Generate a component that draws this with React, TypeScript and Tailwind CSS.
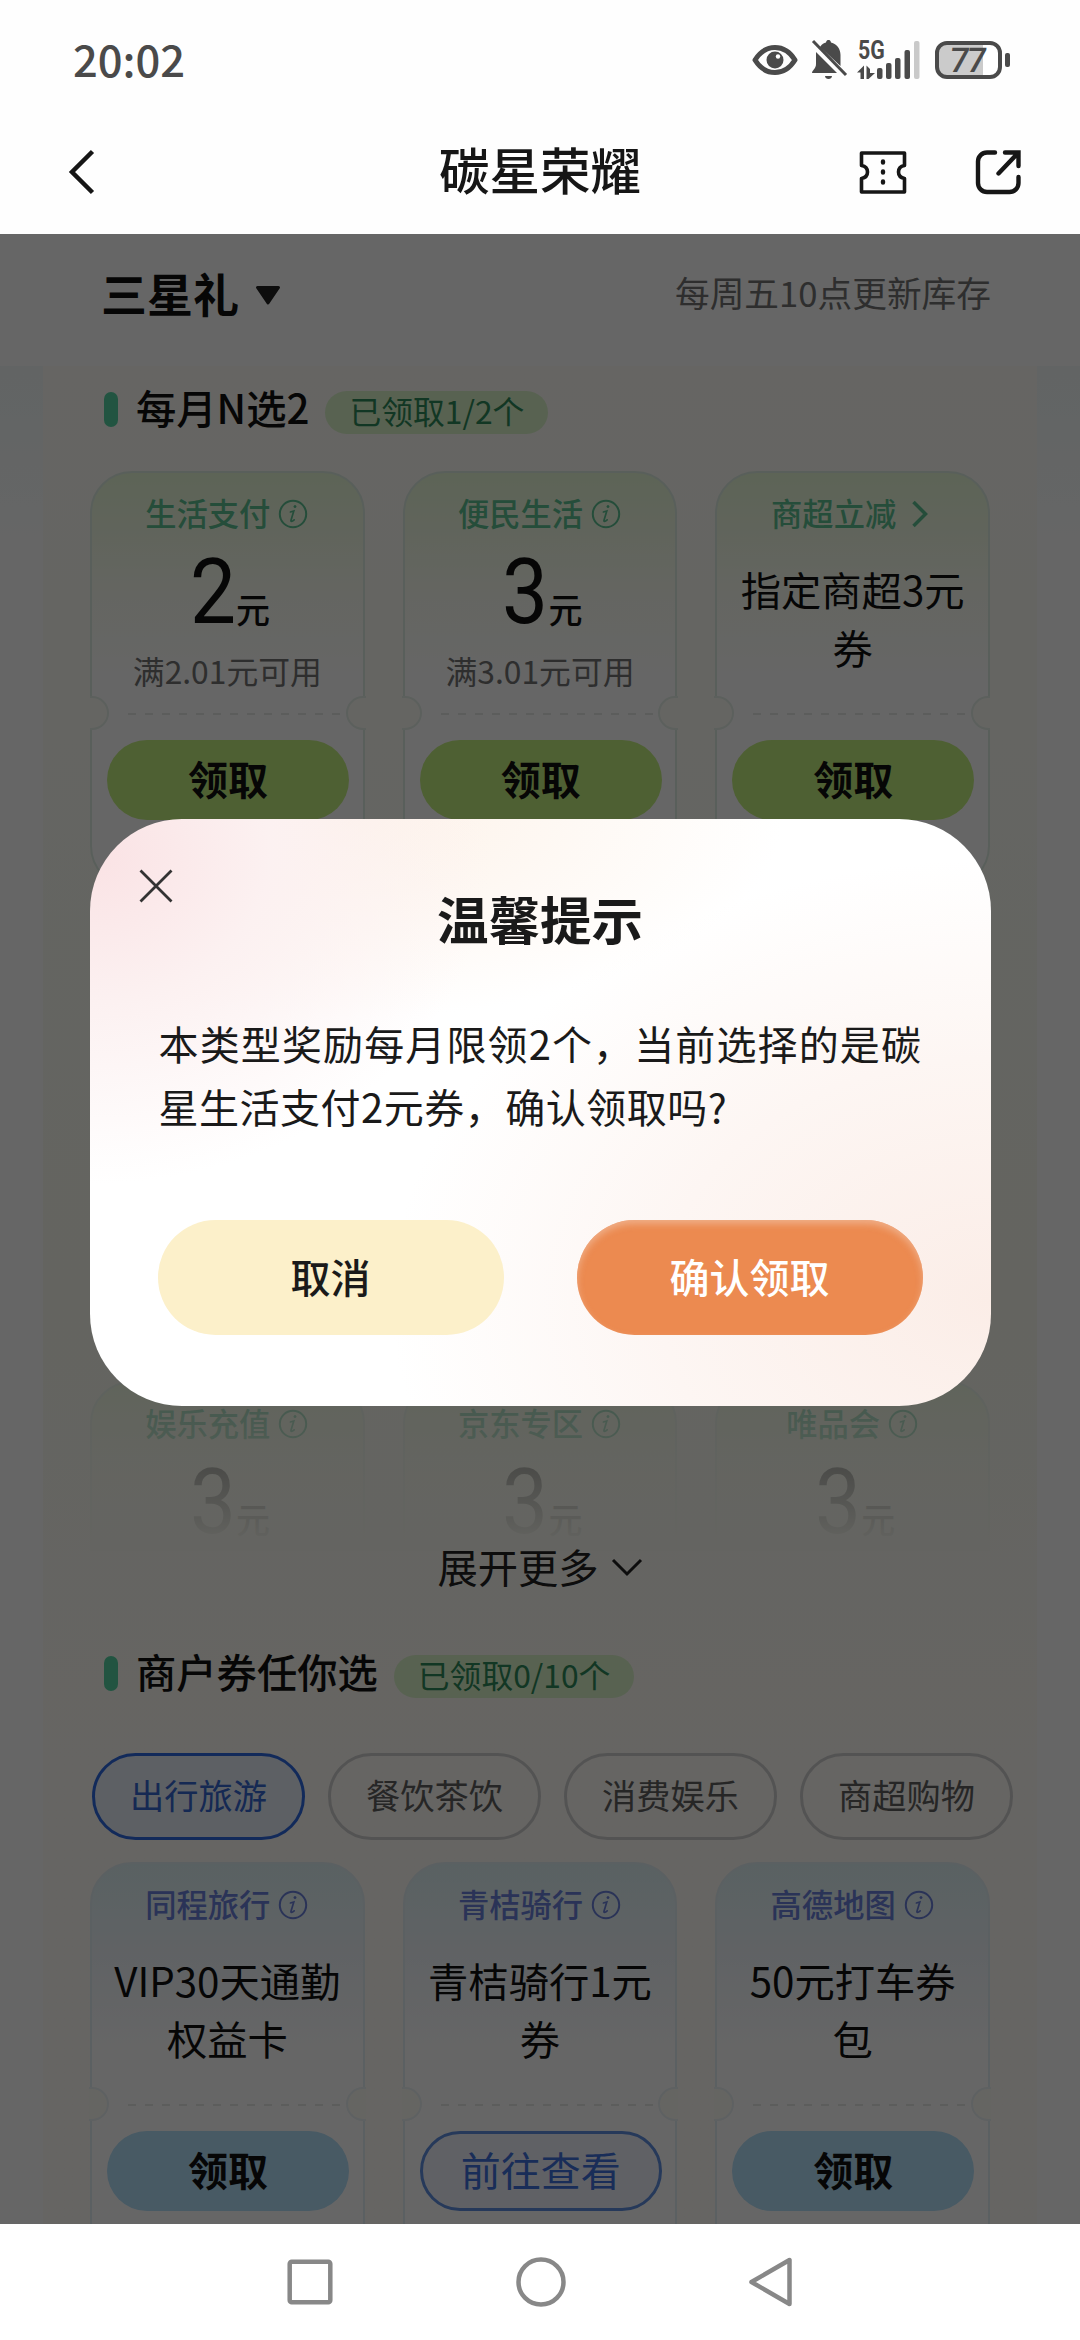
import { clsx } from 'clsx';

type Tone = 'green' | 'blue';

interface Coupon {
  brand: string;
  amount?: string;
  note?: string;
  lines?: string[];
  action?: string;
  outlined?: boolean;
  arrow?: boolean;
}

const MONTHLY: Coupon[] = [
  { brand: '生活支付', amount: '2', note: '满2.01元可用', action: '领取' },
  { brand: '便民生活', amount: '3', note: '满3.01元可用', action: '领取' },
  { brand: '商超立减', lines: ['指定商超3元', '券'], action: '领取', arrow: true },
];

const MONTHLY_MORE: Coupon[] = [
  { brand: '娱乐充值', amount: '3' },
  { brand: '京东专区', amount: '3' },
  { brand: '唯品会', amount: '3' },
];

const MERCHANT: Coupon[] = [
  { brand: '同程旅行', lines: ['VIP30天通勤', '权益卡'], action: '领取' },
  { brand: '青桔骑行', lines: ['青桔骑行1元', '券'], action: '前往查看', outlined: true },
  { brand: '高德地图', lines: ['50元打车券', '包'], action: '领取' },
];

const TABS = ['出行旅游', '餐饮茶饮', '消费娱乐', '商超购物'];

function InfoIcon() {
  return (
    <svg width="30" height="30" viewBox="0 0 30 30" fill="none" stroke="currentColor" strokeWidth="2">
      <circle cx="15" cy="15" r="13.200" />
      <path d="M12.400 13l3.400-1-2.800 9.200c-.4 1.500.8 1.700 3.200-.4" strokeWidth="1.700" strokeLinecap="round" />
      <circle cx="17" cy="7.600" r="1.100" fill="currentColor" strokeWidth="0.800" />
    </svg>
  );
}

function StatusBar() {
  return (
    <div className="flex h-[120px] items-center justify-between pl-[73px] pr-[70px] text-[#4a4a4a]">
      <span className="-mt-[3px] text-[43.500px] font-medium leading-none">20:02</span>
      <div className="flex items-center">
        <svg width="46" height="32" viewBox="0 0 46 32" className="mr-[12px]">
          <path d="M3 16C8 8 15 3.500 23 3.500S38 8 43 16c-5 8-12 12.500-20 12.500S8 24 3 16z" fill="none" stroke="currentColor" strokeWidth="5" strokeLinejoin="round" />
          <circle cx="23" cy="16" r="8.500" fill="currentColor" />
          <circle cx="26" cy="12.500" r="2.200" fill="#fff" />
        </svg>
        <svg width="38" height="42" viewBox="0 0 38 42" className="mr-[9px]" fill="currentColor">
          <path d="M6 13L27 34H2c0-3 4-4 4-9z" />
          <path d="M10 8c2-3 4-4 6-4.500C16.300 1.500 17.500 1 18.500 1s2.200.5 2.500 2.500C27 5 30.500 10 30.500 16v11z" />
          <path d="M3 2l33 34" stroke="currentColor" strokeWidth="3" />
          <path d="M15 37h7c0 4-7 4-7 0z" />
        </svg>
        <div className="relative mr-[15px] h-[40px] w-[63px]">
          <span className="absolute left-[1px] top-0 origin-left scale-x-[0.82] font-[Roboto] text-[26px] font-bold leading-[20px]">5G</span>
          <svg width="63" height="40" viewBox="0 0 63 40" fill="currentColor">
            <path d="M0 32.500L7 25.500V39H3.500v-6.500zM9.500 25.500L13 29v4h5L11.500 39h-2z" />
            <rect x="20" y="28" width="5.500" height="11" rx="2" />
            <rect x="29" y="23" width="5.500" height="16" rx="2" />
            <rect x="38" y="18" width="5.500" height="21" rx="2" />
            <rect x="47.500" y="10" width="5.500" height="29" rx="2" />
            <rect x="57" y="1" width="5.500" height="38" rx="2" fill="#c9c9c9" />
          </svg>
        </div>
        <div className="relative flex h-[38px] w-[67px] items-center justify-center overflow-hidden rounded-[12px] border-4 border-[#4a4a4a] bg-linear-to-r from-[#cbcbcb] from-75% to-white to-75%">
          <span className="-ml-[2px] -skew-x-6 font-[Roboto] text-[34px] font-medium leading-none tracking-[-2px]">77</span>
        </div>
        <div className="ml-[3px] h-[14px] w-[5px] rounded-[2px] bg-[#4a4a4a]" />
      </div>
    </div>
  );
}

function NavBar() {
  return (
    <div className="relative flex h-[114px] items-start justify-between pl-[67px] pr-[59px] pt-[29px] text-[#161616]">
      <svg width="30" height="46" viewBox="0 0 30 46" fill="none" stroke="currentColor" strokeWidth="4.500">
        <path d="M25.500 2.500L5 23l20.500 20.500" />
      </svg>
      <h1 className="absolute inset-x-0 top-[22px] text-center text-[50.500px] font-medium leading-[52px]">碳星荣耀</h1>
      <div className="flex gap-[68px]">
        <svg width="48" height="46" viewBox="0 0 48 46" fill="none" stroke="currentColor" strokeWidth="3.600">
          <path d="M2.500 4h43v12.500c-8 1.500-8 11.500 0 13V43h-43V29.500c8-1.500 8-11.500 0-13z" strokeLinejoin="round" />
          <path d="M24 12.500v1M24 22.500v1M24 32.500v1" strokeWidth="4.400" strokeLinecap="round" />
        </svg>
        <svg width="46" height="46" viewBox="0 0 46 46" fill="none" stroke="currentColor" strokeWidth="4.400" strokeLinecap="round">
          <path d="M20 3.500h-8a9 9 0 0 0-9 9V34a9 9 0 0 0 9 9h22.500a9 9 0 0 0 9-9v-6" />
          <path d="M30 3.500h13.500V17M42 5L23.500 24.500" strokeLinejoin="miter" />
        </svg>
      </div>
    </div>
  );
}

function SectionTitle({ title, badge }: { title: string; badge: string }) {
  return (
    <div className="flex h-[84px] items-center pl-[14px]">
      <div className="mr-[18px] mt-[3px] h-[35px] w-[14px] rounded-full bg-[#55d3a2]" />
      <h2 className="-mt-[3px] text-[40.300px] font-medium leading-[56px] text-[#111]">{title}</h2>
      <div className="ml-[16px] mt-[9px] h-[43px] rounded-full bg-[#dcf5cb] px-[24px] text-[31.800px] leading-[38px] text-[#2f8a5a]">{badge}</div>
    </div>
  );
}

function Notch({ side, tone }: { side: 'left' | 'right'; tone: Tone }) {
  return (
    <div
      className={clsx(
        'absolute top-[223px] h-[34px] w-[20px] border-2 bg-[#fdfcf6]',
        side === 'left' ? '-left-[3px] rounded-r-full border-l-0' : '-right-[3px] rounded-l-full border-r-0',
        tone === 'green' ? 'border-[#e6f0e8]' : 'border-[#ecf2f4]',
      )}
    />
  );
}

function CouponCard({ coupon, tone }: { coupon: Coupon; tone: Tone }) {
  const { brand, amount, note, lines, action, outlined, arrow } = coupon;
  return (
    <div
      className={clsx(
        'relative flex h-[417px] flex-col items-center rounded-[42px] border-2',
        tone === 'green'
          ? 'border-[#dfeee3] bg-linear-to-b from-[#e8f9d8] via-[#fbfdf3] via-30% to-white to-50%'
          : 'border-[#e4f0f4] bg-linear-to-b from-[#dff3f6] via-[#eff5fb] via-20% to-white to-45%',
      )}
    >
      <div
        className={clsx(
          'mt-[20px] flex h-[42px] items-center text-[31.300px] leading-none',
          tone === 'green' ? 'text-[#5cc092]' : 'text-[#6a80da]',
        )}
      >
        <span className="-mt-[3px] font-medium">{brand}</span>
        {arrow ? (
          <svg width="18" height="30" viewBox="0 0 18 30" className="ml-[15px] mr-[5px]" fill="none" stroke="currentColor" strokeWidth="3.500">
            <path d="M2.500 3l12 12-12 12" />
          </svg>
        ) : (
          <span className="ml-[8px] mr-[1px]"><InfoIcon /></span>
        )}
      </div>

      {amount && (
        <div className="mt-[12px] flex h-[91px] items-baseline text-[#111]">
          <span className="origin-right scale-x-90 font-[Roboto] text-[91px] leading-[91px]">{amount}</span>
          <span className="text-[34px] font-medium leading-none">元</span>
        </div>
      )}
      {note && <p className="mt-[10px] text-[31.800px] leading-[44px] text-[#747474]">{note}</p>}
      {lines && (
        <div className="mt-[25px] text-center text-[40.300px] leading-[58px] text-[#111]">
          {lines.map((line) => <p key={line}>{line}</p>)}
        </div>
      )}

      <Notch side="left" tone={tone} />
      <Notch side="right" tone={tone} />
      <div className="absolute left-[36px] top-[240px] h-[2px] w-[212px] bg-[repeating-linear-gradient(90deg,#e6e8e7_0_8px,transparent_8px_17px)]" />

      {action && (
        <button
          className={clsx(
            'absolute left-[15px] top-[267px] h-[80px] w-[242px] rounded-full pb-[4px] text-[40px] leading-none',
            outlined
              ? 'border-3 border-[#5f8fe0] bg-[#f1f3fc] text-[#3f70dc]'
              : 'font-bold text-[#111]',
            !outlined && (tone === 'green' ? 'bg-[#c4ef81]' : 'bg-[#b4e0fa]'),
          )}
        >
          {action}
        </button>
      )}
    </div>
  );
}

function CouponRow({ coupons, tone }: { coupons: Coupon[]; tone: Tone }) {
  return (
    <div className="grid shrink-0 grid-cols-3 gap-x-[38px]">
      {coupons.map((c) => <CouponCard key={c.brand} coupon={c} tone={tone} />)}
    </div>
  );
}

function RewardsPage() {
  return (
    <div className="h-full bg-linear-to-b from-[#f4fbfb] from-7% to-white to-16%">
      <div className="flex h-[132px] items-start justify-between bg-white pl-[101px] pr-[89px] pt-[28px]">
        <div className="flex items-center">
          <span className="-mt-[2px] text-[46px] font-bold leading-[64px] text-[#111]">三星礼</span>
          <svg width="26" height="21" viewBox="0 0 26 21" className="ml-[16px] mt-[5px]" fill="#222">
            <path d="M2.500 2.500h21L13 18z" stroke="#222" strokeWidth="3" strokeLinejoin="round" />
          </svg>
        </div>
        <span className="text-[34.700px] leading-[60px] text-[#747474]">每周五10点更新库存</span>
      </div>

      <div className="mx-[43px] h-[1858px] bg-linear-to-b from-[#fefdf8] via-[#f9fbf0] via-50% to-[#fffcf7] to-75% px-[47px]">
        <SectionTitle title="每月N选2" badge="已领取1/2个" />
        <div className="relative mt-[21px] flex h-[1080px] flex-col gap-[38px] overflow-hidden">
          <CouponRow coupons={MONTHLY} tone="green" />
          {/* second row sits fully under the dialog */}
          <div className="h-[417px] shrink-0" />
          <CouponRow coupons={MONTHLY_MORE} tone="green" />
          <div className="absolute inset-x-0 bottom-0 h-[240px] bg-linear-to-b from-[#fafbf2]/20 to-[#fafbf2] to-98%" />
        </div>
        <div className="relative -mt-[7px] flex h-[48px] items-center justify-center text-[40.300px] text-[#222]">
          <span className="-mt-[5px] leading-[48px]">展开更多</span>
          <svg width="32" height="20" viewBox="0 0 32 20" className="ml-[12px]" fill="none" stroke="currentColor" strokeWidth="3">
            <path d="M2 2l14 14L30 2" />
          </svg>
        </div>

        <div className="mt-[38px]">
          <SectionTitle title="商户券任你选" badge="已领取0/10个" />
        </div>
        <div className="ml-[2px] mt-[39px] flex gap-[23px]">
          {TABS.map((tab, i) => (
            <div
              key={tab}
              className={clsx(
                'h-[87px] w-[213px] shrink-0 rounded-full border-3 text-center text-[34.200px] leading-[76px]',
                i === 0 ? 'border-[#2f6ae0] bg-[#e9effa] text-[#3566d0]' : 'border-[#d0d0d0] text-[#606060]',
              )}
            >
              {tab}
            </div>
          ))}
        </div>
        <div className="mt-[22px]">
          <CouponRow coupons={MERCHANT} tone="blue" />
        </div>
      </div>
    </div>
  );
}

function ConfirmDialog() {
  return (
    <div className="relative mt-[585px] h-[587px] w-[901px] rounded-[92px] bg-white bg-[radial-gradient(ellipse_400px_330px_at_0%_6%,#fae2e4_0%,#fcf1f1_45%,transparent_100%),radial-gradient(ellipse_440px_200px_at_28%_0%,#fdf2e8_0%,transparent_100%),radial-gradient(ellipse_600px_440px_at_100%_82%,#fbede7_0%,#fdf6f3_55%,transparent_100%)] px-[68px]">
      <svg width="34" height="34" viewBox="0 0 34 34" className="absolute left-[49px] top-[50px]" stroke="#333" strokeWidth="2.800">
        <path d="M1.500 1.500l31 31M32.500 1.500l-31 31" />
      </svg>
      <h2 className="pt-[67px] text-center text-[51.500px] font-bold leading-[64px] text-[#1a1a1a]">温馨提示</h2>
      <p className="mx-[1px] mt-[62px] text-justify text-[40px] leading-[63px] tracking-[0.5px] text-[#1a1a1a]">
        本类型奖励每月限领2个，当前选择的是碳星生活支付2元券，确认领取吗?
      </p>
      <div className="mt-[82px] flex justify-between text-[40px] font-medium leading-none">
        <button className="h-[115px] w-[346px] rounded-full bg-[#fcf0ca] pb-[4px] text-[#1a1a1a]">取消</button>
        <button className="h-[115px] w-[346px] rounded-full bg-[#ec8a50] pb-[4px] text-white shadow-[inset_0_4px_7px_0_rgba(240,180,145,0.85)]">确认领取</button>
      </div>
    </div>
  );
}

function SystemNav() {
  return (
    <div className="flex h-[116px] items-center justify-center gap-[183px] bg-white text-[#888]">
      <svg width="46" height="46" viewBox="0 0 46 46" fill="none" stroke="currentColor" strokeWidth="4.500">
        <rect x="2.700" y="2.700" width="40.600" height="40.600" rx="2" />
      </svg>
      <svg width="50" height="50" viewBox="0 0 50 50" fill="none" stroke="currentColor" strokeWidth="4.500">
        <circle cx="25" cy="25" r="22.500" />
      </svg>
      <svg width="44" height="50" viewBox="0 0 44 50" fill="none" stroke="currentColor" strokeWidth="4.500" strokeLinejoin="round">
        <path d="M40.500 3v44L2.500 25z" />
      </svg>
    </div>
  );
}

export default function App() {
  return (
    <div className="flex h-[2340px] w-[1080px] flex-col overflow-hidden bg-[#fefefe] font-['Noto_Sans_CJK_SC',sans-serif]">
      <header className="h-[234px] shrink-0">
        <StatusBar />
        <NavBar />
      </header>
      <main className="relative h-[1990px] shrink-0 overflow-hidden">
        <RewardsPage />
        <div className="absolute inset-0 flex items-start justify-center bg-black/60">
          <ConfirmDialog />
        </div>
      </main>
      <SystemNav />
    </div>
  );
}
